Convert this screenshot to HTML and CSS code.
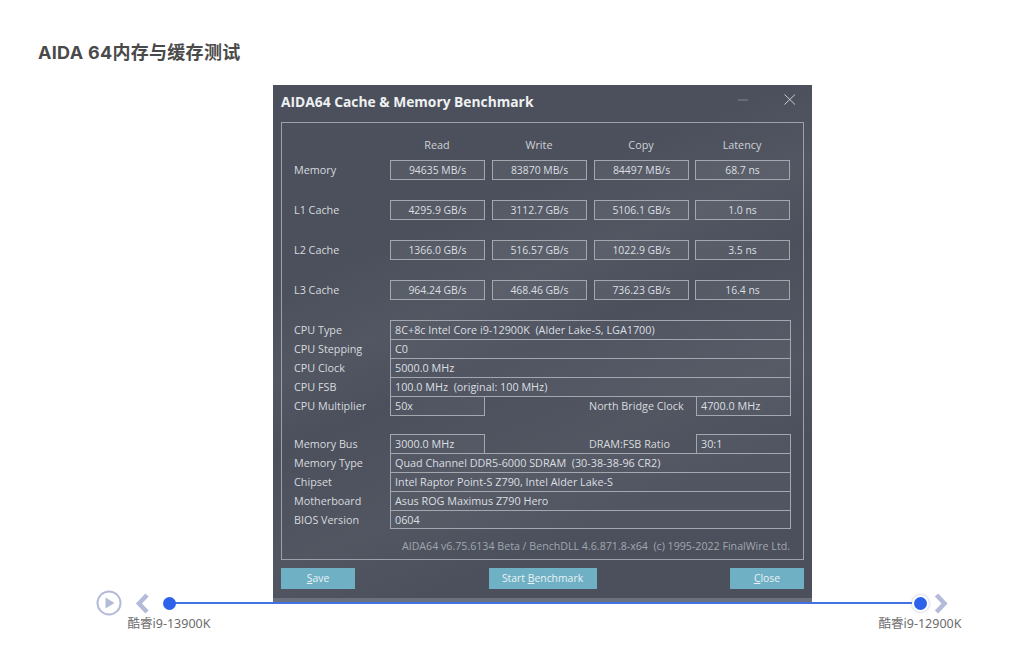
FILE: index.html
```html
<!DOCTYPE html>
<html lang="zh">
<head>
<meta charset="utf-8">
<title>AIDA 64内存与缓存测试</title>
<link rel="stylesheet" href="styles.css">
</head>
<body>
<div class="page">
  <h2 class="heading">AIDA 64内存与缓存测试</h2>
  <div class="window">
    <div class="titlebar">
      <span class="title">AIDA64 Cache &amp; Memory Benchmark</span>
      <span class="controls">
        <svg class="ctl" width="12" height="12" viewBox="0 0 12 12"><path d="M0 6h10" stroke="#7f8590" stroke-width="1"/></svg>
        <svg class="ctl" width="12" height="12" viewBox="0 0 12 12"><path d="M.5.5l10.500 10M11 .5L.5 10.500" stroke="#c9ccd2" stroke-width="1" fill="none"/></svg>
      </span>
    </div>
    <div class="panel">
      <div class="bench head">
        <span></span><span class="colh">Read</span><span class="colh">Write</span><span class="colh">Copy</span><span class="colh">Latency</span>
      </div>
      <div class="bench"><span class="lbl">Memory</span><span class="box">94635 MB/s</span><span class="box">83870 MB/s</span><span class="box">84497 MB/s</span><span class="box">68.7 ns</span></div>
      <div class="bench"><span class="lbl">L1 Cache</span><span class="box">4295.9 GB/s</span><span class="box">3112.7 GB/s</span><span class="box">5106.1 GB/s</span><span class="box">1.0 ns</span></div>
      <div class="bench"><span class="lbl">L2 Cache</span><span class="box">1366.0 GB/s</span><span class="box">516.57 GB/s</span><span class="box">1022.9 GB/s</span><span class="box">3.5 ns</span></div>
      <div class="bench"><span class="lbl">L3 Cache</span><span class="box">964.24 GB/s</span><span class="box">468.46 GB/s</span><span class="box">736.23 GB/s</span><span class="box">16.4 ns</span></div>

      <div class="info first">
        <div class="row"><span class="lbl">CPU Type</span><span class="val wide">8C+8c Intel Core i9-12900K&nbsp; (Alder Lake-S, LGA1700)</span></div>
        <div class="row"><span class="lbl">CPU Stepping</span><span class="val wide">C0</span></div>
        <div class="row"><span class="lbl">CPU Clock</span><span class="val wide">5000.0 MHz</span></div>
        <div class="row"><span class="lbl">CPU FSB</span><span class="val wide">100.0 MHz&nbsp; (original: 100 MHz)</span></div>
        <div class="row"><span class="lbl">CPU Multiplier</span><span class="val short">50x</span><span class="mid">North Bridge Clock</span><span class="val tail">4700.0 MHz</span></div>
      </div>
      <div class="info second">
        <div class="row"><span class="lbl">Memory Bus</span><span class="val short">3000.0 MHz</span><span class="mid">DRAM:FSB Ratio</span><span class="val tail">30:1</span></div>
        <div class="row"><span class="lbl">Memory Type</span><span class="val wide">Quad Channel DDR5-6000 SDRAM&nbsp; (30-38-38-96 CR2)</span></div>
        <div class="row"><span class="lbl">Chipset</span><span class="val wide">Intel Raptor Point-S Z790, Intel Alder Lake-S</span></div>
        <div class="row"><span class="lbl">Motherboard</span><span class="val wide">Asus ROG Maximus Z790 Hero</span></div>
        <div class="row"><span class="lbl">BIOS Version</span><span class="val wide">0604</span></div>
      </div>
      <div class="credit">AIDA64 v6.75.6134 Beta / BenchDLL 4.6.871.8-x64&nbsp; (c) 1995-2022 FinalWire Ltd.</div>
    </div>
    <div class="footer">
      <span class="btn b-save"><u>S</u>ave</span>
      <span class="btn b-start">Start <u>B</u>enchmark</span>
      <span class="btn b-close"><u>C</u>lose</span>
    </div>
  </div>

  <div class="slider">
    <svg class="play" width="26" height="26" viewBox="0 0 26 26"><circle cx="13" cy="13" r="11.500" fill="none" stroke="#b4bbd9" stroke-width="2"/><path d="M9.500 7.500v11l9-5.500z" fill="#b4bbd9"/></svg>
    <svg class="prev" width="16" height="22" viewBox="0 0 16 22"><path d="M13 2L5 10.500 13 19" fill="none" stroke="#b4bbd9" stroke-width="4.500"/></svg>
    <svg class="next" width="16" height="22" viewBox="0 0 16 22"><path d="M3.500 2l8 8.500-8 8.500" fill="none" stroke="#b4bbd9" stroke-width="4.500"/></svg>
    <div class="track"></div>
    <span class="dot d-left"></span>
    <span class="dot d-right"></span>
    <span class="cap c-left">酷睿i9-13900K</span>
    <span class="cap c-right">酷睿i9-12900K</span>
  </div>
</div>
</body>
</html>
```
FILE: styles.css
```css
html, body { margin: 0; padding: 0; background: #fff; }
.page {
  position: relative;
  width: 1018px;
  height: 648px;
  overflow: hidden;
  padding: 41px 0 0;
  box-sizing: border-box;
  font-family: "Open Sans", "Noto Sans", "Noto Sans CJK SC", sans-serif;
}
.heading {
  margin: 0 0 20px 38px;
  height: 24px;
  line-height: 24px;
  font-size: 18px;
  letter-spacing: .3px;
  font-weight: 700;
  color: #4a4a4a;
  font-family: "Inter", "Noto Sans CJK SC", sans-serif;
}
.window {
  margin-left: 273px;
  width: 539px;
  height: 518px;
  padding: 0 8px;
  box-sizing: border-box;
  color: #d3d6db;
  font-size: 10.800px;
  background:
    linear-gradient(to bottom, transparent 513px, #6a707d 513px),
    linear-gradient(158deg, transparent 28%, rgba(255,255,255,.04) 40%, transparent 50%, rgba(255,255,255,.035) 66%, transparent 78%),
    #4b505c;
}
.titlebar {
  height: 37px;
  padding-bottom: 5px;
  box-sizing: border-box;
  display: flex;
  align-items: center;
  justify-content: space-between;
}
.title { font-size: 13.800px; font-weight: 700; color: #eef0f2; }
.controls { display: flex; gap: 34px; margin-right: 8px; margin-top: -2px; }
.ctl { display: block; }
.panel {
  width: 523px;
  height: 438px;
  box-sizing: border-box;
  border: 1px solid #9ba0a9;
  padding: 13px 0 0 12px;
}
.bench {
  display: grid;
  grid-template-columns: 96px 102px 102px 101px 95px;
  align-items: center;
  height: 20px;
  margin-bottom: 20px;
}
.bench.head { height: 18px; margin-bottom: 6px; }
.bench .lbl { margin-top: -2px; }
.colh { width: 94px; text-align: center; color: #cfd2d7; margin-top: -2px; }
.lbl { color: #d8dade; white-space: nowrap; }
.box {
  width: 95px;
  height: 20px;
  line-height: 18px;
  box-sizing: border-box;
  border: 1px solid #a3a7af;
  background: rgba(255,255,255,.06);
  text-align: center;
  color: #dcdfe2;
  font-size: 10.400px;
}
.info { display: flex; flex-direction: column; }
.info.second { margin-top: 19px; }
.row {
  display: flex;
  align-items: stretch;
  height: 19px;
  line-height: 17px;
}
.row .lbl { width: 96px; flex: none; line-height: 19px; }
.val {
  box-sizing: border-box;
  height: 20px;
  border: 1px solid #a3a7af;
  padding-left: 4px;
  background: rgba(255,255,255,.03);
  color: #dcdfe2;
  white-space: nowrap;
}
.second .row:last-child .val { height: 19px; }
.wide { width: 401px; }
.short { width: 95px; }
.mid { width: 211px; padding-left: 104px; box-sizing: border-box; flex: none; line-height: 19px; color: #d8dade; white-space: nowrap; }
.tail { width: 95px; }
.credit {
  width: 496px;
  margin-top: 10px;
  text-align: right;
  color: #a2a6af;
  font-size: 10.650px;
  white-space: nowrap;
}
.footer {
  display: flex;
  justify-content: space-between;
  width: 523px;
  margin-top: 8px;
}
.btn {
  height: 21px;
  line-height: 21px;
  background: #6fb0c4;
  color: #e9f2f5;
  text-align: center;
  box-sizing: border-box;
  font-size: 10.400px;
}
.b-save, .b-close { width: 74px; }
.b-start { width: 108px; }
.slider {
  position: absolute;
  left: 0;
  top: 0;
  width: 1018px;
  height: 648px;
  pointer-events: none;
}
.track { position: absolute; left: 169px; top: 602px; width: 751px; height: 2px; background: #4173e4; }
.dot {
  position: absolute;
  width: 13px;
  height: 13px;
  border-radius: 50%;
  background: #2d62ea;
}
.d-left { left: 163px; top: 597px; }
.d-right { left: 914px; top: 597px; box-shadow: 0 0 0 2px #fff, 0 0 3px 2px rgba(120,130,160,.55); }
.play { position: absolute; left: 96px; top: 590px; }
.prev { position: absolute; left: 134px; top: 593px; }
.next { position: absolute; left: 933px; top: 593px; }
.cap {
  position: absolute;
  top: 615px;
  width: 120px;
  text-align: center;
  font-size: 12.500px;
  line-height: 17px;
  color: #6d6d6d;
  font-family: "Noto Sans", "Noto Sans CJK SC", sans-serif;
}
.c-left { left: 109px; }
.c-right { left: 860px; }
```
